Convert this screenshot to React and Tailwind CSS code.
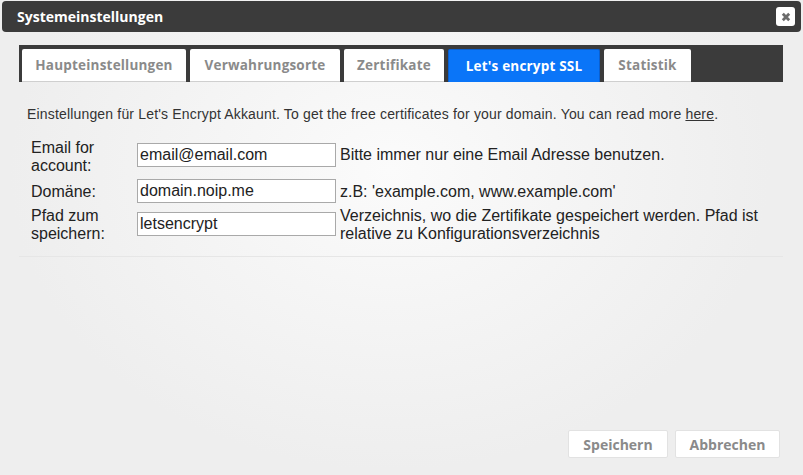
import React from "react";

const tabs = [
  { label: "Haupteinstellungen", w: "w-[164px]" },
  { label: "Verwahrungsorte", w: "w-[150px]" },
  { label: "Zertifikate", w: "w-[100px]" },
  { label: "Let's encrypt SSL", w: "w-[152px]", active: true },
  { label: "Statistik", w: "w-[87px]" },
];

export default function App() {
  return (
    <div
      className="w-[803px] h-[475px] relative overflow-hidden bg-[#eeeeee]"
      style={{
        backgroundImage:
          "radial-gradient(ellipse 380px 300px at 390px 170px, #fbfbfb 0%, #f5f5f5 45%, #eeeeee 100%)",
      }}
    >
      <div className="flex flex-col h-full" style={{ fontFamily: "'Liberation Sans', Arial, sans-serif" }}>
        {/* Title bar */}
        <div className="mx-[2px] mt-[1px] h-[31px] rounded-[4px] bg-[#3b3b3b] flex items-center justify-between pl-[15px] pr-[6px]">
          <span
            className="text-white text-[14px] font-bold"
            style={{ fontFamily: "'Open Sans', sans-serif" }}
          >
            Systemeinstellungen
          </span>
          <div className="w-[19px] h-[19px] rounded-[3px] bg-white flex items-center justify-center">
            <svg width="10" height="10" viewBox="0 0 10 10">
              <path d="M1.8 1.8 L8.2 8.2 M8.2 1.8 L1.8 8.2" stroke="#6b6b6b" strokeWidth="2.8" strokeLinecap="butt" />
            </svg>
          </div>
        </div>

        {/* Tab bar */}
        <div className="ml-[19px] mr-[20px] mt-[13px] h-[37px] bg-[#3b3b3b] flex items-end pl-[3px] gap-[4px]">
          {tabs.map((t) => (
            <div
              key={t.label}
              className={
                "h-[33px] rounded-t-[2px] flex items-center justify-center pt-[1px] text-[13.5px] font-bold tracking-[0.2px] " +
                t.w +
                (t.active
                  ? " bg-[#0a75f8] text-white border border-b-0 border-[#0a5fd0]"
                  : " bg-white text-[#8a8a8a] border-b border-[#cfcfcf]")
              }
              style={{ fontFamily: "'Open Sans', sans-serif" }}
            >
              {t.label}
            </div>
          ))}
        </div>

        {/* Content */}
        <div className="mx-[19px] mr-[20px] border-b border-[#e6e6e6] pb-[13px]">
          <p className="mt-[23px] ml-[8px] text-[14px] tracking-[0.17px] text-[#333333] leading-[18px]">
            Einstellungen für Let's Encrypt Akkaunt. To get the free certificates for your domain. You can read more{" "}
            <span className="underline">here</span>.
          </p>

          <div className="mt-[15px] ml-[12px] grid grid-cols-[106px_203px_1fr] gap-y-[4px] text-[16px] leading-[18px] text-[#222222]">
            <div className="pt-[1px]">Email for<br />account:</div>
            <div className="flex items-start pt-[5px]">
              <div className="w-[199px] h-[24px] border border-[#a9a9a9] bg-white px-[2px] flex items-center">email@email.com</div>
            </div>
            <div className="pt-[8px]">Bitte immer nur eine Email Adresse benutzen.</div>

            <div className="pt-[4px]">Domäne:</div>
            <div className="flex items-start">
              <div className="w-[199px] h-[24px] border border-[#a9a9a9] bg-white px-[2px] flex items-center">domain.noip.me</div>
            </div>
            <div className="pt-[4px]">z.B: 'example.com, www.example.com'</div>

            <div>Pfad zum<br />speichern:</div>
            <div className="flex items-start pt-[5px]">
              <div className="w-[199px] h-[24px] border border-[#a9a9a9] bg-white px-[2px] flex items-center">letsencrypt</div>
            </div>
            <div>Verzeichnis, wo die Zertifikate gespeichert werden. Pfad ist<br />relative zu Konfigurationsverzeichnis</div>
          </div>
        </div>

        <div className="flex-1" />

        {/* Buttons */}
        <div className="flex justify-end gap-[7px] pr-[23px] pb-[17px]">
          <button
            className="w-[100px] h-[28px] bg-white rounded-[2px] border border-[#e2e2e2] text-[14px] font-bold text-[#8a8a8a]"
            style={{ fontFamily: "'Open Sans', sans-serif" }}
          >
            Speichern
          </button>
          <button
            className="w-[105px] h-[28px] bg-white rounded-[2px] border border-[#e2e2e2] text-[14px] font-bold text-[#8a8a8a]"
            style={{ fontFamily: "'Open Sans', sans-serif" }}
          >
            Abbrechen
          </button>
        </div>
      </div>
    </div>
  );
}
